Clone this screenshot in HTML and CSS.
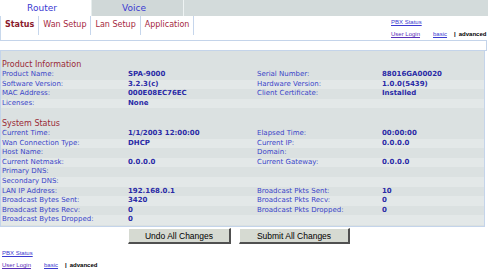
FILE: index.html
```html
<!DOCTYPE html>
<html>
<head>
<meta charset="utf-8">
<link rel="stylesheet" href="styles.css">
</head>
<body>
<div class="page">
  <div class="tabs">
    <div class="tab tab-on">Router</div>
    <div class="tab tab-off">Voice</div>
    <div class="tab-rest"></div>
  </div>
  <div class="subbar">
    <div class="subtabs">
      <span class="st st-on">Status</span>
      <span class="st">Wan Setup</span>
      <span class="st">Lan Setup</span>
      <span class="st">Application</span>
    </div>
    <div class="links">
      <div class="lrow"><a class="lk" href="#">PBX Status</a></div>
      <div class="lrow"><a class="lk visited" href="#">User Login</a><a class="lk basic" href="#">basic</a><span class="sep">|</span><span class="adv">advanced</span></div>
    </div>
  </div>
  <div class="band"></div>
  <div class="content">
    <div class="head">Product Information</div>
    <div class="row"><span class="lb">Product Name:</span><span class="vl">SPA-9000</span><span class="lb">Serial Number:</span><span class="vl">88016GA00020</span></div>
    <div class="row"><span class="lb">Software Version:</span><span class="vl">3.2.3(c)</span><span class="lb">Hardware Version:</span><span class="vl">1.0.0(5439)</span></div>
    <div class="row"><span class="lb">MAC Address:</span><span class="vl">000E08EC76EC</span><span class="lb">Client Certificate:</span><span class="vl">Installed</span></div>
    <div class="row"><span class="lb">Licenses:</span><span class="vl">None</span><span class="lb"></span><span class="vl"></span></div>
    <div class="spacer"></div>
    <div class="head">System Status</div>
    <div class="row"><span class="lb">Current Time:</span><span class="vl">1/1/2003 12:00:00</span><span class="lb">Elapsed Time:</span><span class="vl">00:00:00</span></div>
    <div class="row"><span class="lb">Wan Connection Type:</span><span class="vl">DHCP</span><span class="lb">Current IP:</span><span class="vl">0.0.0.0</span></div>
    <div class="row"><span class="lb">Host Name:</span><span class="vl"></span><span class="lb">Domain:</span><span class="vl"></span></div>
    <div class="row"><span class="lb">Current Netmask:</span><span class="vl">0.0.0.0</span><span class="lb">Current Gateway:</span><span class="vl">0.0.0.0</span></div>
    <div class="row"><span class="lb">Primary DNS:</span><span class="vl"></span><span class="lb"></span><span class="vl"></span></div>
    <div class="row"><span class="lb">Secondary DNS:</span><span class="vl"></span><span class="lb"></span><span class="vl"></span></div>
    <div class="row"><span class="lb">LAN IP Address:</span><span class="vl">192.168.0.1</span><span class="lb">Broadcast Pkts Sent:</span><span class="vl">10</span></div>
    <div class="row"><span class="lb">Broadcast Bytes Sent:</span><span class="vl">3420</span><span class="lb">Broadcast Pkts Recv:</span><span class="vl">0</span></div>
    <div class="row"><span class="lb">Broadcast Bytes Recv:</span><span class="vl">0</span><span class="lb">Broadcast Pkts Dropped:</span><span class="vl">0</span></div>
    <div class="row"><span class="lb">Broadcast Bytes Dropped:</span><span class="vl">0</span><span class="lb"></span><span class="vl"></span></div>
  </div>
  <div class="buttons">
    <button class="btn btn-undo">Undo All Changes</button>
    <button class="btn btn-submit">Submit All Changes</button>
  </div>
  <div class="footer">
    <div class="frow"><a class="lk" href="#">PBX Status</a></div>
    <div class="frow"><a class="lk visited" href="#">User Login</a><a class="lk basic" href="#">basic</a><span class="sep">|</span><span class="adv">advanced</span></div>
  </div>
</div>
</body>
</html>
```

FILE: styles.css
```css
html, body {
  margin: 0;
  padding: 0;
  background: #ffffff;
}
.page {
  width: 488px;
  height: 274px;
  overflow: hidden;
  font-family: "DejaVu Sans", Verdana, sans-serif;
}
.tabs {
  display: flex;
  height: 16px;
  background: #d3dbdb;
}
.tab {
  font-size: 9px;
  line-height: 16px;
  color: #3a3ad2;
  text-align: center;
  padding-right: 7px;
  box-sizing: border-box;
}
.tab-on {
  width: 92px;
  background: #ffffff;
  border-right: 1px solid #e6eded;
}
.tab-off {
  width: 92px;
  background: #d0d8d8;
  border-right: 1px solid #eef3f3;
}
.tab-rest {
  flex: 1;
}
.subbar {
  height: 24px;
  display: flex;
  justify-content: space-between;
  background: #ffffff;
  border-left: 1px solid #c8d8ec;
}
.subtabs {
  display: flex;
  height: 18px;
  align-items: flex-start;
}
.st {
  font-size: 8px;
  color: #a52840;
  padding: 1px 4px 0 4px;
  height: 18px;
  line-height: 16px;
  border-right: 1px solid #c6d6ec;
}
.st-on {
  font-weight: bold;
  color: #8a1a2c;
  padding-left: 4px;
}
.links {
  width: 97px;
  font-family: "Liberation Sans", Arial, sans-serif;
  font-size: 6px;
}
.lrow {
  height: 12px;
  line-height: 12px;
  display: flex;
  align-items: center;
}
.lk {
  color: #3a3ad0;
  text-decoration: underline;
}
.visited {
  color: #5a30b8;
}
.basic {
  margin-left: 13px;
}
.sep {
  margin-left: 7px;
  margin-right: 3px;
  color: #000;
  font-weight: bold;
}
.adv {
  color: #000;
  font-weight: bold;
}
.band {
  height: 9px;
  background: #ffffff;
  border-top: 1px solid #c4d4ea;
  border-bottom: 1px solid #c4d4ea;
  border-right: 1px solid #c4d4ea;
  margin-right: 1px;
}
.content {
  background: #dbe1e1;
  border-left: 1px solid #c4d4ea;
  border-right: 1px solid #c4d4ea;
  border-bottom: 1px solid #c4d4ea;
  margin-right: 3px;
  padding-top: 9px;
  height: 166px;
  box-sizing: content-box;
}
.head {
  font-size: 8px;
  line-height: 10px;
  color: #9a2a36;
  padding-left: 1px;
}
.row {
  display: grid;
  grid-template-columns: 126px 129px 125px 1fr;
  padding-left: 1px;
  height: 9.6px;
  line-height: 9.6px;
  font-size: 7px;
}
.row:nth-of-type(odd) {
  background: #e3e8e8;
}
.lb {
  color: #3a44c8;
}
.vl {
  color: #2a2aa6;
  font-weight: bold;
}
.spacer {
  height: 10.7px;
}
.buttons {
  display: flex;
  gap: 8px;
  padding-left: 128px;
  margin-top: 1px;
}
.btn {
  height: 16px;
  padding: 0;
  margin: 0;
  font-family: "Liberation Sans", Arial, sans-serif;
  font-size: 8.5px;
  color: #000;
  background: #d6dad2;
  border: 1px solid #ffffff;
  border-right: 2px solid #505050;
  border-bottom: 2px solid #505050;
}
.btn-undo {
  width: 103px;
}
.btn-submit {
  width: 111px;
}
.footer {
  padding-left: 2px;
  padding-top: 3px;
  font-family: "Liberation Sans", Arial, sans-serif;
  font-size: 6px;
}
.frow {
  height: 12px;
  line-height: 12px;
  display: flex;
  align-items: center;
}
```
